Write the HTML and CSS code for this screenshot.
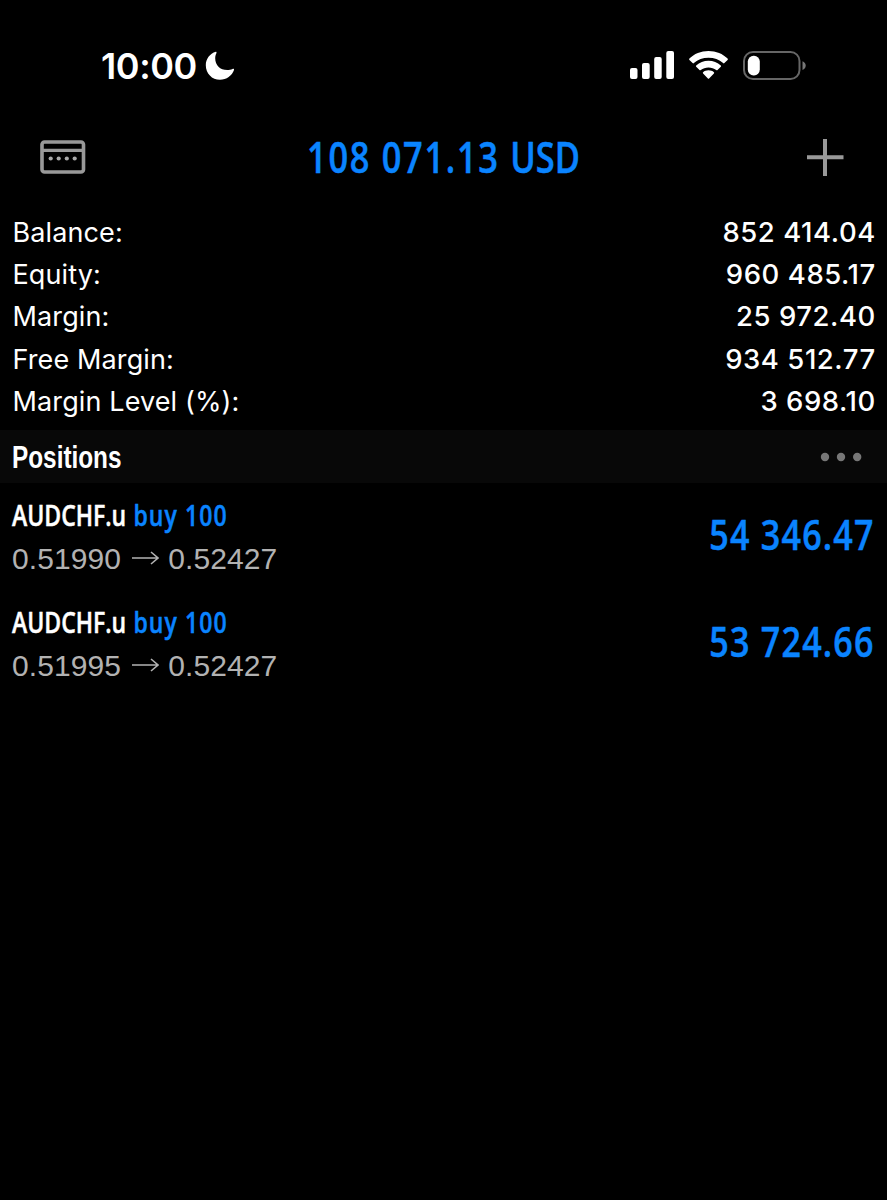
FILE: index.html
```html
<!DOCTYPE html>
<html lang="en">
<head>
    <meta charset="UTF-8">
    <meta name="viewport" content="width=device-width, initial-scale=1.0">
    <title>Trade</title>
    <link rel="stylesheet" href="styles.css">
</head>
<body>
    <!-- STATUS BAR -->
    <div class="status-bar">
        <div class="clock">
            <span class="time">10:00</span>
            <svg class="moon" width="30" height="30" viewBox="0 0 30 30">
                <path d="M10.800.8C4.800 2.700.8 8 .8 14.200.8 22.400 7 28.800 15 28.800c6.500 0 12-4 14-9.700.3-1-.5-1.600-1.400-1.200-1.700.8-3.400 1.100-5.400 1.100-7.200 0-12-4.800-12-11.800 0-2 .5-3.600 1.200-5 .4-.9-.1-1.500-.6-1.400z" fill="#fff"/>
            </svg>
        </div>
        <div class="status-icons">
            <svg width="45" height="28" viewBox="0 0 45 28" fill="#fff">
                <rect x="0" y="17" width="7.500" height="11" rx="2"/>
                <rect x="12" y="12" width="7.700" height="16" rx="2"/>
                <rect x="24.200" y="6" width="7.500" height="22" rx="2"/>
                <rect x="36.300" y="0" width="7.700" height="28" rx="2"/>
            </svg>
            <svg class="wifi" width="39" height="28" viewBox="0 0 39 28" fill="#fff">
                <path d="M19.500 0C27 0 34 2.800 38.600 7.600c.4.4.4.9 0 1.300l-3.200 3.200c-.4.4-.9.4-1.300 0C30.200 8.600 25.100 6.800 19.500 6.800S8.800 8.600 4.900 12.100c-.4.4-.9.4-1.300 0L.4 8.900C0 8.500 0 8 .4 7.600 5 2.800 12 0 19.500 0z"/>
                <path d="M19.500 9.800c4.700 0 9 1.700 12.300 4.600.4.4.4.900 0 1.300l-3.300 3.300c-.4.4-.8.400-1.300 0-2.100-1.700-4.800-2.600-7.700-2.600s-5.600.9-7.700 2.600c-.5.4-.9.4-1.300 0l-3.300-3.300c-.4-.4-.4-.9 0-1.300 3.300-2.900 7.600-4.600 12.300-4.600z"/>
                <path d="M19.500 19.300c2.100 0 4 .7 5.400 1.900.4.4.4.800 0 1.200l-4.800 5c-.4.4-.8.4-1.200 0l-4.800-5c-.4-.4-.4-.8 0-1.200 1.400-1.200 3.300-1.900 5.400-1.900z"/>
            </svg>
            <svg class="battery" width="64" height="29" viewBox="0 0 64 29">
                <rect x="1" y="1" width="55.500" height="27" rx="9" fill="none" stroke="#666" stroke-width="2"/>
                <path d="M59.500 10.200c2 .8 3.200 2.300 3.200 4.400s-1.200 3.700-3.200 4.500z" fill="#777"/>
                <rect x="4.800" y="4.800" width="12" height="19.600" rx="5.800" fill="#fff"/>
            </svg>
        </div>
    </div>

    <!-- TOOLBAR -->
    <div class="toolbar">
        <svg width="46" height="34" viewBox="0 0 46 34">
            <rect x="2" y="2" width="41.500" height="30" rx="2.500" fill="none" stroke="#999" stroke-width="3.600"/>
            <path d="M2 10.400h41" stroke="#999" stroke-width="3.400"/>
            <g fill="#aaa">
                <circle cx="10.700" cy="18.500" r="2.100"/>
                <circle cx="18.700" cy="18.500" r="2.100"/>
                <circle cx="26.800" cy="18.500" r="2.100"/>
                <circle cx="34.700" cy="18.500" r="2.100"/>
            </g>
        </svg>
        <h1 class="total">108 071.13 <span class="currency">USD</span></h1>
        <svg width="38" height="38" viewBox="0 0 38 38">
            <path d="M1 19.300h36.500M19 1v37" stroke="#999" stroke-width="4"/>
        </svg>
    </div>

    <!-- ACCOUNT SUMMARY -->
    <div class="summary">
        <div class="summary-row"><span class="label">Balance:</span><span class="value">852 414.04</span></div>
        <div class="summary-row"><span class="label">Equity:</span><span class="value">960 485.17</span></div>
        <div class="summary-row"><span class="label">Margin:</span><span class="value">25 972.40</span></div>
        <div class="summary-row"><span class="label">Free Margin:</span><span class="value">934 512.77</span></div>
        <div class="summary-row"><span class="label">Margin Level (%):</span><span class="value">3 698.10</span></div>
    </div>

    <!-- POSITIONS -->
    <div class="section-header">
        <h2>Positions</h2>
        <svg width="42" height="10" viewBox="0 0 42 10" fill="#777">
            <circle cx="5" cy="5" r="4.200"/>
            <circle cx="21" cy="5" r="4.200"/>
            <circle cx="37.200" cy="5" r="4.200"/>
        </svg>
    </div>
    <div class="position">
        <div class="details">
            <div class="symbol"><span class="name">AUDCHF.u</span> <span class="side">buy 100</span></div>
            <div class="prices">
                <span>0.51990</span>
                <svg class="arrow" width="27" height="14" viewBox="0 0 27 14"><path d="M0 7h26M19 1l7 6-7 6" fill="none" stroke="#b2b2b2" stroke-width="1.600"/></svg>
                <span>0.52427</span>
            </div>
        </div>
        <div class="profit">54 346.47</div>
    </div>
    <div class="position">
        <div class="details">
            <div class="symbol"><span class="name">AUDCHF.u</span> <span class="side">buy 100</span></div>
            <div class="prices">
                <span>0.51995</span>
                <svg class="arrow" width="27" height="14" viewBox="0 0 27 14"><path d="M0 7h26M19 1l7 6-7 6" fill="none" stroke="#b2b2b2" stroke-width="1.600"/></svg>
                <span>0.52427</span>
            </div>
        </div>
        <div class="profit">53 724.66</div>
    </div>
</body>
</html>
```
FILE: styles.css
```css
* {
    box-sizing: border-box;
}
body {
    margin: 0;
    min-height: 100vh;
    background-color: #000;
    color: #fff;
    font-family: Inter, sans-serif;
}
svg {
    display: block;
    flex-shrink: 0;
}
h1, h2 {
    margin: 0;
}
.status-bar {
    display: flex;
    justify-content: space-between;
    align-items: center;
    height: 106px;
    padding: 26px 80px 0 101px;
}
.clock {
    display: flex;
    align-items: center;
}
.time {
    width: 104px;
    font-size: 36px;
    font-weight: 600;
    letter-spacing: -0.4px;
    line-height: 40px;
}
.status-icons {
    display: flex;
    align-items: center;
    padding-bottom: 2px;
}
.wifi {
    margin-left: 14px;
}
.battery {
    margin-left: 15px;
}
.toolbar {
    display: flex;
    justify-content: space-between;
    align-items: center;
    height: 104px;
    padding: 0 43px 2px 40px;
}
.total, .symbol, .profit {
    font-family: "Open Sans", sans-serif;
    font-weight: 600;
    white-space: nowrap;
    -webkit-text-stroke: 0.5px currentColor;
}
.total {
    margin-right: 4px;
    padding-bottom: 1px;
    color: #0a84ff;
    font-size: 43px;
    letter-spacing: 2.1px;
    line-height: 50px;
    transform: scaleX(0.8);
}
.currency {
    letter-spacing: 0;
}
.summary {
    height: 220px;
    padding: 1.5px 12px 0 12.5px;
}
.summary-row {
    display: flex;
    justify-content: space-between;
    height: 42.4px;
    font-size: 27px;
    line-height: 42.4px;
}
.label {
    letter-spacing: 0.12px;
}
.value {
    margin-top: -1px;
    margin-right: -0.8px;
    font-size: 27.5px;
    font-weight: 500;
    letter-spacing: 0.55px;
}
.section-header {
    display: flex;
    justify-content: space-between;
    align-items: center;
    height: 53px;
    padding: 0 25px 0 12px;
    background-color: #080808;
}
.section-header h2 {
    padding-top: 2px;
    font-family: "Liberation Sans", Arial, sans-serif;
    font-size: 31px;
    transform: scaleX(0.785);
    transform-origin: left;
}
.position {
    display: flex;
    justify-content: space-between;
    align-items: center;
    height: 107px;
    padding: 0 12px;
}
.symbol {
    margin-top: -1px;
    font-size: 29.5px;
    line-height: 44px;
    transform: scaleX(0.78);
    transform-origin: left;
}
.side {
    margin-left: 1.5px;
    color: #0a84ff;
    letter-spacing: 1.4px;
}
.prices {
    display: flex;
    align-items: center;
    color: #b2b2b2;
    font-family: "Liberation Sans", Arial, sans-serif;
    font-size: 30px;
    letter-spacing: 0.1px;
    line-height: 43px;
}
.arrow {
    margin: 0 9px 0 11px;
}
.profit {
    padding-bottom: 5px;
    color: #0a84ff;
    font-size: 41.5px;
    letter-spacing: 1.5px;
    transform: scaleX(0.82);
    transform-origin: right;
}
```
